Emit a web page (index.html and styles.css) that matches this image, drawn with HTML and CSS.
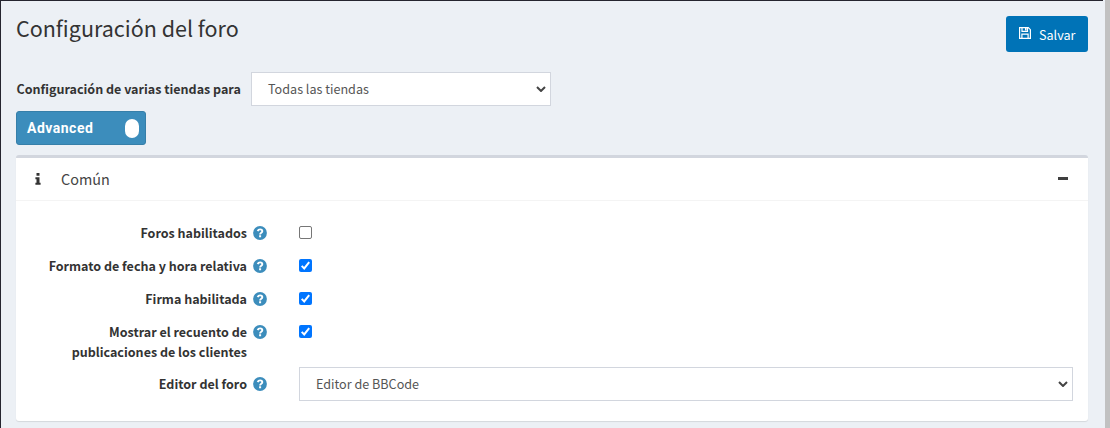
FILE: index.html
```html
<!DOCTYPE html>
<html lang="es">
<head>
<meta charset="utf-8">
<title>Configuración del foro</title>
<link rel="stylesheet" href="styles.css">
</head>
<body>
<svg class="defs" width="0" height="0" aria-hidden="true">
  <symbol id="help" viewBox="0 0 14 14"><circle cx="7" cy="7" r="6.900" fill="currentColor"/><path d="M4.700 5.100C5.100 3.900 6 3.400 7.100 3.400c1.200 0 2.200.7 2.200 1.800 0 1.500-2.200 1.500-2.200 3.200" fill="none" stroke="#fff" stroke-width="1.900"/><path d="M6.100 9.300h2v2h-2z" fill="#fff"/></symbol>
  <symbol id="arrow" viewBox="0 0 10 6"><path d="M1 1l4 4 4-4" fill="none" stroke="currentColor" stroke-width="2"/></symbol>
  <symbol id="check" viewBox="0 0 13 13"><path d="M2.700 6.900l2.500 2.500 5-6.300" fill="none" stroke="#fff" stroke-width="2"/></symbol>
</svg>
<div class="window">
  <main class="page">
    <header class="page-header">
      <h1 class="title">Configuración del foro</h1>
      <button class="save"><svg class="save-icon" viewBox="0 0 12 12"><path d="M.6.6h8.700l2.100 2.100v8.700H.600zM3 .6v3.700h5.500V.6M2.900 11.400V7.200h6.200v4.200" fill="none" stroke="currentColor" stroke-width="1.200"/><path d="M6 1h1.600v2.500H6z" fill="currentColor"/></svg><span>Salvar</span></button>
    </header>
    <div class="store-row">
      <span class="label store-label">Configuración de varias tiendas para</span>
      <div class="select store-select"><span>Todas las tiendas</span><svg class="arrow"><use href="#arrow"/></svg></div>
    </div>
    <button class="mode"><span>Advanced</span><i class="knob"></i></button>
    <section class="card">
      <div class="card-header">
        <svg class="info" viewBox="0 0 6 12"><path d="M1.500 0h3v2.700h-3zM.4 4.200h4.100v5.500h1.100v2H.400v-2h1.100V6.200H.400z" fill="currentColor"/></svg>
        <h2 class="card-title">Común</h2>
        <i class="minus"></i>
      </div>
      <div class="card-body">
        <div class="row"><div class="label row-label">Foros habilitados</div><svg class="help"><use href="#help"/></svg><span class="box"></span></div>
        <div class="row"><div class="label row-label">Formato de fecha y hora relativa</div><svg class="help"><use href="#help"/></svg><span class="box checked"><svg><use href="#check"/></svg></span></div>
        <div class="row"><div class="label row-label">Firma habilitada</div><svg class="help"><use href="#help"/></svg><span class="box checked"><svg><use href="#check"/></svg></span></div>
        <div class="row tall"><div class="label row-label">Mostrar el recuento de<br>publicaciones de los clientes</div><svg class="help"><use href="#help"/></svg><span class="box checked"><svg><use href="#check"/></svg></span></div>
        <div class="row editor"><div class="label row-label">Editor del foro</div><svg class="help"><use href="#help"/></svg><div class="select editor-select"><span>Editor de BBCode</span><svg class="arrow"><use href="#arrow"/></svg></div></div>
      </div>
    </section>
  </main>
  <div class="scrollbar"></div>
</div>
</body>
</html>
```
FILE: styles.css
```css
* { box-sizing: border-box; }
body { margin: 0; overflow: hidden; background: #ecf0f5; color: #333; font-family: "Noto Sans CJK SC", sans-serif; font-size: 12.6px; line-height: 20px; }
svg { display: block; flex: none; }
h1, h2 { margin: 0; font-weight: 400; }
button { border: 0; padding: 0; font: inherit; color: #fff; }
.defs { display: none; }
.window { display: flex; height: 428px; }
.page { width: 1103px; padding: 0 15px; border-left: 1px solid #25252f; border-top: 1px solid #25252f; flex: none; }
.scrollbar { width: 5px; margin-left: 2px; background: #c1c1c1; }

.page-header { display: flex; justify-content: space-between; height: 71px; padding-top: 15px; }
.title { font-size: 21.500px; line-height: 24px; }
.save { display: flex; width: 82px; height: 36px; padding: 11px 0 0 13px; gap: 8px; border-radius: 3px; background: #0073b7; line-height: 16px; }
.save-icon { width: 12px; height: 12px; }

.store-row { display: flex; align-items: center; height: 34px; }
.label { font-weight: 700; font-size: 12.530px; }
.store-label { width: 235px; padding-left: .5px; white-space: nowrap; }
.select { display: flex; align-items: center; justify-content: space-between; height: 34px; padding: 0 4px 0 16px; border: 1px solid #d2d6de; background: #fff; color: #555; }
.store-select { width: 300px; }
.arrow { width: 10px; height: 6px; color: #444; }

.mode { display: flex; align-items: center; justify-content: space-between; width: 130px; height: 34px; margin-top: 5px; padding: 0 6px 0 10px; border: 1px solid #367fa9; border-radius: 3px; background: #3c8dbc; font: 700 14px/20px Roboto, sans-serif; letter-spacing: .5px; }
.knob { width: 14px; height: 19px; border-radius: 7px; background: #fff; }

.card { width: 1072px; height: 266px; margin-top: 10px; border-top: 3px solid #d2d6de; border-radius: 3px; background: #fff; box-shadow: 0 1px 1px rgba(0,0,0,.1); }
.card-header { display: flex; align-items: center; height: 43px; padding: 0 20px 0 19px; border-bottom: 1px solid #f4f4f4; }
.info { width: 6px; height: 12px; }
.card-title { margin-left: 20px; font-size: 14.400px; color: #444; }
.minus { width: 10px; height: 3px; margin: 0 0 2px auto; background: #3f3f3f; }

.card-body { padding: 22px 15px 0 0; }
.row { display: flex; align-items: flex-start; height: 33px; }
.tall { height: 45px; }
.row-label { width: 231px; text-align: right; white-space: nowrap; }
.help { width: 14px; height: 14px; margin: 3px 32px 0 6px; color: #3c8dbc; }
.box { width: 13px; height: 13px; margin-top: 3px; border: 1px solid #767676; border-radius: 2px; background: #fff; }
.checked { border: 0; background: #0075ff; }
.checked svg { width: 13px; height: 13px; }
.editor { height: 34px; }
.editor .row-label { padding-top: 7px; }
.editor .help { margin-top: 10px; }
.editor-select { flex: 1; }
```
